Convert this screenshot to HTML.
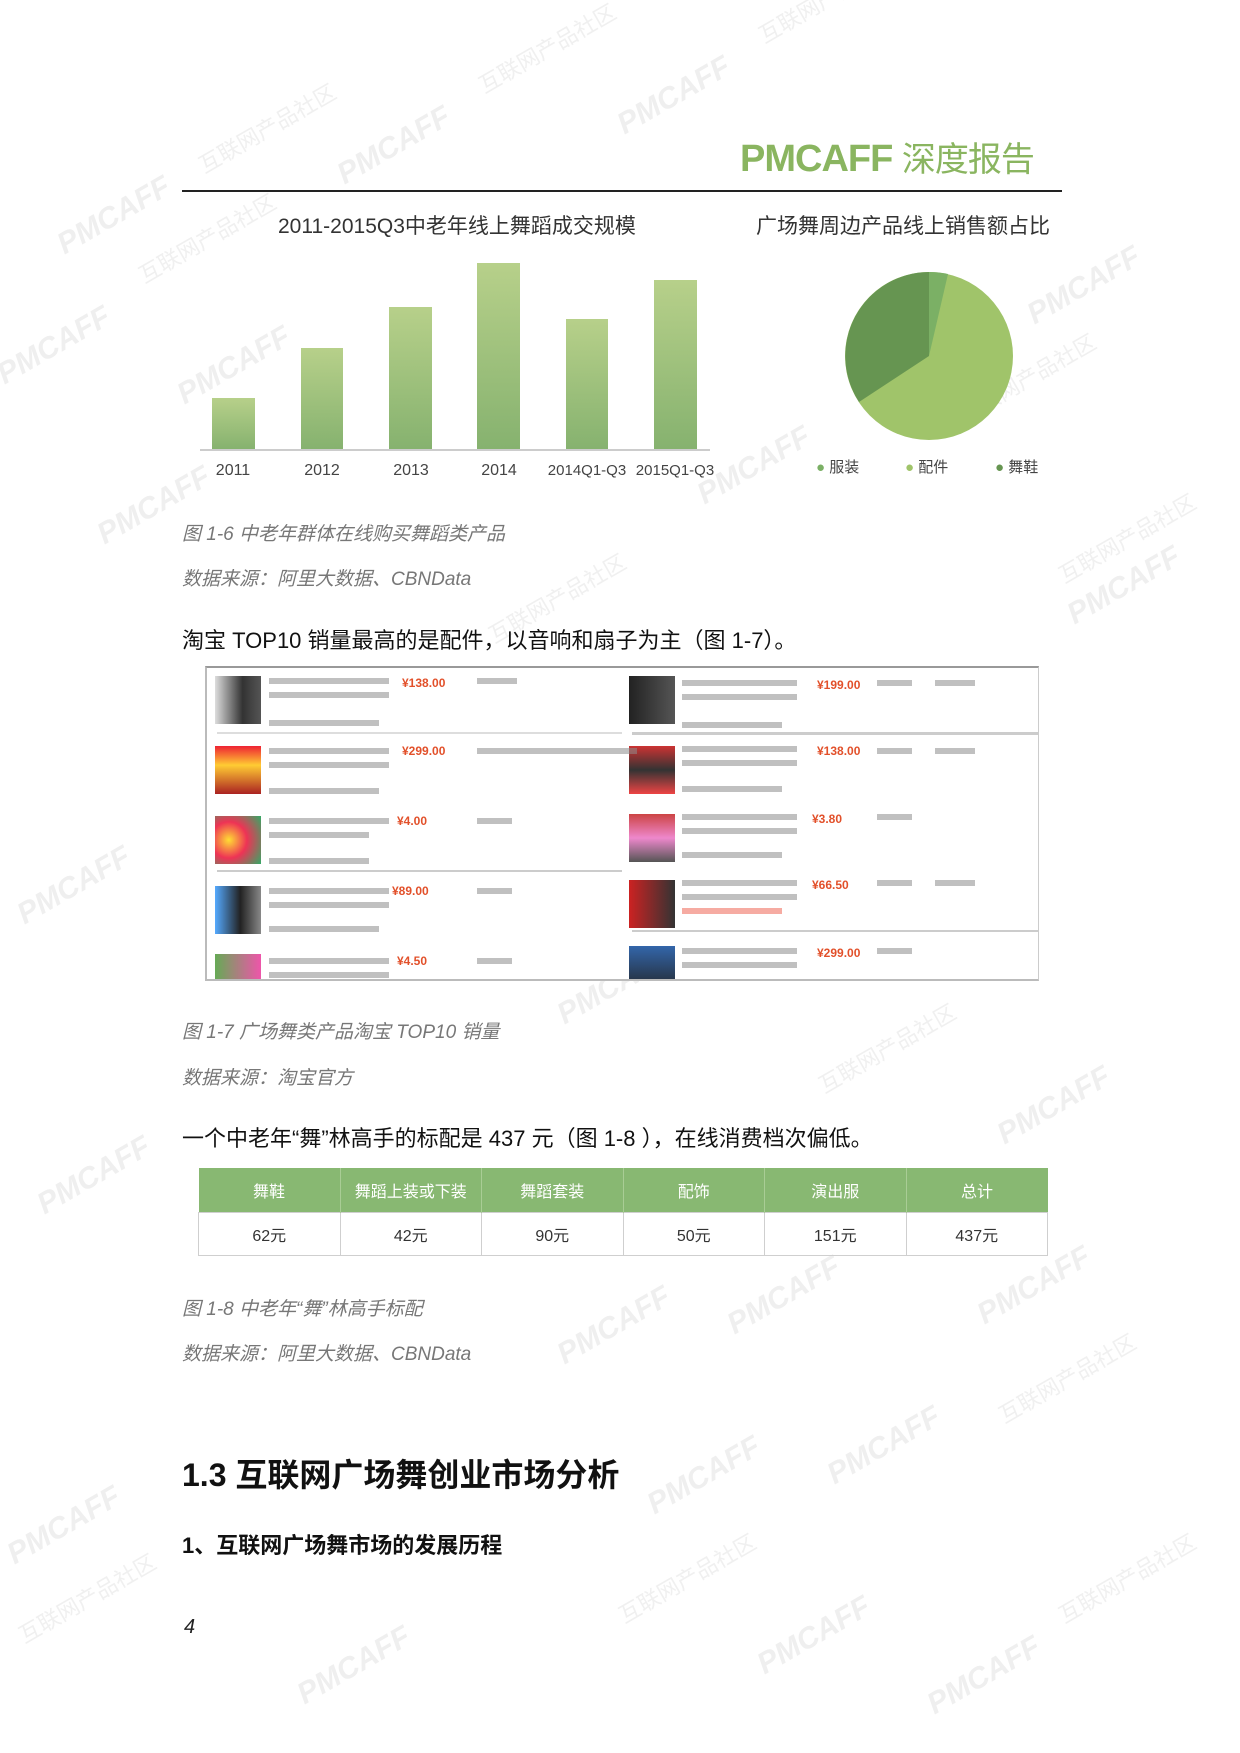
<!DOCTYPE html>
<html><head><meta charset="utf-8"><style>
*{margin:0;padding:0;box-sizing:border-box}
body{width:1240px;height:1753px;background:#fff;position:relative;overflow:hidden;font-family:"Liberation Sans","Noto Sans CJK SC",sans-serif;color:#222}
.a{position:absolute;white-space:nowrap;z-index:2}
.wm{position:absolute;white-space:nowrap;color:#efefef;transform:rotate(-30deg);transform-origin:left center;font-weight:bold;font-style:italic;font-size:30px;z-index:1;pointer-events:none}
.wm2{position:absolute;white-space:nowrap;color:#f0f0f0;transform:rotate(-30deg);transform-origin:left center;font-size:22px;z-index:1}
.cap{font-style:italic;color:#777;font-size:19px}
.bar{position:absolute;background:linear-gradient(#b7d08a,#86b26f);z-index:2}
.yl{position:absolute;top:462px;font-size:16px;color:#444;text-align:center;width:90px;z-index:2}
table{border-collapse:collapse;position:absolute;left:198px;top:1168px;width:850px;font-size:16px;text-align:center;table-layout:fixed;z-index:2}
th{background:#88b872;color:#fff;font-weight:normal;height:44px;border-right:1px solid #a9cd95}
td{height:43px;border:1px solid #cfcfcf;color:#333;background:transparent}
.th{position:absolute;width:46px;height:48px}
.ln{position:absolute;height:6px;background:#8c8c8c;opacity:.55}
.pc{position:absolute;color:#e2502a;font-size:12px;font-weight:bold}
</style></head><body>

<div class="a" style="left:740px;top:132px;font-size:38px;font-weight:bold;color:#8ab560;letter-spacing:-1px">PMCAFF <span style="font-weight:normal;font-size:34px">深度报告</span></div>
<div class="a" style="left:182px;top:190px;width:880px;height:2px;background:#222"></div>

<div class="a" style="left:278px;top:210px;font-size:21px;color:#333">2011-2015Q3中老年线上舞蹈成交规模</div>
<div class="a" style="left:756px;top:210px;font-size:21px;color:#333">广场舞周边产品线上销售额占比</div>

<div class="bar" style="left:212px;top:398px;width:43px;height:51px"></div>
<div class="bar" style="left:301px;top:348px;width:42px;height:101px"></div>
<div class="bar" style="left:389px;top:307px;width:43px;height:142px"></div>
<div class="bar" style="left:477px;top:263px;width:43px;height:186px"></div>
<div class="bar" style="left:566px;top:319px;width:42px;height:130px"></div>
<div class="bar" style="left:654px;top:280px;width:43px;height:169px"></div>
<div class="a" style="left:200px;top:449px;width:510px;height:2px;background:#ccc"></div>
<div class="yl" style="left:188px">2011</div>
<div class="yl" style="left:277px">2012</div>
<div class="yl" style="left:366px">2013</div>
<div class="yl" style="left:454px">2014</div>
<div class="yl" style="left:532px;width:110px;font-size:15px">2014Q1-Q3</div>
<div class="yl" style="left:620px;width:110px;font-size:15px">2015Q1-Q3</div>

<svg class="a" style="left:844px;top:271px" width="170" height="170" viewBox="-85 -85 170 170">
<circle r="84" fill="#a0c46a"/>
<path d="M0 0 L0 -84 A84 84 0 0 1 19 -82 Z" fill="#7bb065"/>
<path d="M0 0 L-70 46 A84 84 0 0 1 0 -84 Z" fill="#669551"/>
</svg>
<div class="a" style="left:816px;top:456px;font-size:15px;color:#444"><span style="color:#7bb065">●</span> 服装</div>
<div class="a" style="left:905px;top:456px;font-size:15px;color:#444"><span style="color:#a0c46a">●</span> 配件</div>
<div class="a" style="left:995px;top:456px;font-size:15px;color:#444"><span style="color:#669551">●</span> 舞鞋</div>

<div class="a cap" style="left:182px;top:519px">图 1-6  中老年群体在线购买舞蹈类产品</div>
<div class="a cap" style="left:182px;top:564px">数据来源：阿里大数据、CBNData</div>
<div class="a" style="left:182px;top:623px;font-size:22px;color:#111">淘宝 TOP10 销量最高的是配件，以音响和扇子为主（图 1-7）。</div>

<div class="a" style="left:205px;top:666px;width:834px;height:315px;border-top:2px solid #999;border-left:2px solid #bbb;border-bottom:2px solid #bbb;border-right:1px solid #ccc;overflow:hidden;background:#fff">
 <div class="a" style="left:10px;top:64px;width:405px;height:2px;background:#ddd"></div>
 <div class="a" style="left:10px;top:202px;width:405px;height:2px;background:#ccc"></div>
 <div class="a" style="left:425px;top:64px;width:410px;height:3px;background:#ccc"></div>
 <div class="a" style="left:425px;top:262px;width:410px;height:2px;background:#ccc"></div>
 <div class="th" style="left:8px;top:8px;background:linear-gradient(90deg,#ddd,#333 60%,#555)"></div>
 <div class="th" style="left:8px;top:78px;background:linear-gradient(#e23 0,#fc3 40%,#a22)"></div>
 <div class="th" style="left:8px;top:148px;background:radial-gradient(circle at 30% 50%,#fd3,#e35 45%,#3a6)"></div>
 <div class="th" style="left:8px;top:218px;background:linear-gradient(90deg,#5af,#222 55%,#888)"></div>
 <div class="th" style="left:8px;top:286px;background:linear-gradient(90deg,#6a5,#e5a)"></div>
 <div class="th" style="left:422px;top:8px;background:linear-gradient(90deg,#222,#555)"></div>
 <div class="th" style="left:422px;top:78px;background:linear-gradient(#c33,#333 50%,#e44)"></div>
 <div class="th" style="left:422px;top:146px;background:linear-gradient(#c44,#e8c 50%,#555)"></div>
 <div class="th" style="left:422px;top:212px;background:linear-gradient(90deg,#c22,#333)"></div>
 <div class="th" style="left:422px;top:278px;background:linear-gradient(#36a,#222)"></div>
 <div class="ln" style="left:62px;top:10px;width:120px"></div><div class="ln" style="left:62px;top:24px;width:120px"></div><div class="ln" style="left:62px;top:52px;width:110px"></div>
 <div class="ln" style="left:62px;top:80px;width:120px"></div><div class="ln" style="left:62px;top:94px;width:120px"></div><div class="ln" style="left:62px;top:120px;width:110px"></div>
 <div class="ln" style="left:62px;top:150px;width:120px"></div><div class="ln" style="left:62px;top:164px;width:100px"></div><div class="ln" style="left:62px;top:190px;width:100px"></div>
 <div class="ln" style="left:62px;top:220px;width:120px"></div><div class="ln" style="left:62px;top:234px;width:120px"></div><div class="ln" style="left:62px;top:258px;width:110px"></div>
 <div class="ln" style="left:62px;top:290px;width:120px"></div><div class="ln" style="left:62px;top:304px;width:120px"></div>
 <div class="pc" style="left:195px;top:8px">¥138.00</div><div class="pc" style="left:195px;top:76px">¥299.00</div><div class="pc" style="left:190px;top:146px">¥4.00</div><div class="pc" style="left:185px;top:216px">¥89.00</div><div class="pc" style="left:190px;top:286px">¥4.50</div>
 <div class="ln" style="left:270px;top:10px;width:40px"></div><div class="ln" style="left:270px;top:80px;width:160px"></div><div class="ln" style="left:270px;top:150px;width:35px"></div><div class="ln" style="left:270px;top:220px;width:35px"></div><div class="ln" style="left:270px;top:290px;width:35px"></div>
 <div class="ln" style="left:475px;top:12px;width:115px"></div><div class="ln" style="left:475px;top:26px;width:115px"></div><div class="ln" style="left:475px;top:54px;width:100px"></div>
 <div class="ln" style="left:475px;top:78px;width:115px"></div><div class="ln" style="left:475px;top:92px;width:115px"></div><div class="ln" style="left:475px;top:118px;width:100px"></div>
 <div class="ln" style="left:475px;top:146px;width:115px"></div><div class="ln" style="left:475px;top:160px;width:115px"></div><div class="ln" style="left:475px;top:184px;width:100px"></div>
 <div class="ln" style="left:475px;top:212px;width:115px"></div><div class="ln" style="left:475px;top:226px;width:115px"></div><div class="ln" style="left:475px;top:240px;width:100px;background:#e65;"></div>
 <div class="ln" style="left:475px;top:280px;width:115px"></div><div class="ln" style="left:475px;top:294px;width:115px"></div>
 <div class="pc" style="left:610px;top:10px">¥199.00</div><div class="pc" style="left:610px;top:76px">¥138.00</div><div class="pc" style="left:605px;top:144px">¥3.80</div><div class="pc" style="left:605px;top:210px">¥66.50</div><div class="pc" style="left:610px;top:278px">¥299.00</div>
 <div class="ln" style="left:670px;top:12px;width:35px"></div><div class="ln" style="left:670px;top:80px;width:35px"></div><div class="ln" style="left:670px;top:146px;width:35px"></div><div class="ln" style="left:670px;top:212px;width:35px"></div><div class="ln" style="left:670px;top:280px;width:35px"></div>
 <div class="ln" style="left:728px;top:12px;width:40px"></div><div class="ln" style="left:728px;top:80px;width:40px"></div><div class="ln" style="left:728px;top:212px;width:40px"></div>
</div>

<div class="a cap" style="left:182px;top:1017px">图 1-7  广场舞类产品淘宝 TOP10 销量</div>
<div class="a cap" style="left:182px;top:1063px">数据来源：淘宝官方</div>
<div class="a" style="left:182px;top:1121px;font-size:22px;color:#111">一个中老年“舞”林高手的标配是 437 元（图 1-8 ），在线消费档次偏低。</div>

<table>
<tr><th>舞鞋</th><th>舞蹈上装或下装</th><th>舞蹈套装</th><th>配饰</th><th>演出服</th><th style="border-right:none">总计</th></tr>
<tr><td>62元</td><td>42元</td><td>90元</td><td>50元</td><td>151元</td><td>437元</td></tr>
</table>

<div class="a cap" style="left:182px;top:1294px">图 1-8  中老年“舞”林高手标配</div>
<div class="a cap" style="left:182px;top:1339px">数据来源：阿里大数据、CBNData</div>

<div class="a" style="left:182px;top:1450px;font-size:32px;font-weight:bold;color:#111">1.3  互联网广场舞创业市场分析</div>
<div class="a" style="left:182px;top:1528px;font-size:22px;font-weight:bold;color:#111">1、互联网广场舞市场的发展历程</div>
<div class="a" style="left:184px;top:1616px;font-size:20px;font-style:italic;color:#222">4</div>

<div class="wm" style="left:60px;top:230px">PMCAFF</div><div class="wm2" style="left:200px;top:150px">互联网产品社区</div>
<div class="wm" style="left:340px;top:160px">PMCAFF</div><div class="wm2" style="left:480px;top:70px">互联网产品社区</div>
<div class="wm" style="left:620px;top:110px">PMCAFF</div><div class="wm2" style="left:760px;top:20px">互联网产品社区</div>
<div class="wm" style="left:0px;top:360px">PMCAFF</div><div class="wm2" style="left:140px;top:260px">互联网产品社区</div>
<div class="wm" style="left:180px;top:380px">PMCAFF</div><div class="wm" style="left:1030px;top:300px">PMCAFF</div>
<div class="wm" style="left:700px;top:480px">PMCAFF</div><div class="wm2" style="left:960px;top:400px">互联网产品社区</div>
<div class="wm" style="left:100px;top:520px">PMCAFF</div><div class="wm2" style="left:1060px;top:560px">互联网产品社区</div>
<div class="wm" style="left:1070px;top:600px">PMCAFF</div><div class="wm2" style="left:490px;top:620px">互联网产品社区</div>
<div class="wm" style="left:920px;top:820px">PMCAFF</div><div class="wm" style="left:20px;top:900px">PMCAFF</div>
<div class="wm" style="left:560px;top:1000px">PMCAFF</div><div class="wm2" style="left:820px;top:1070px">互联网产品社区</div>
<div class="wm" style="left:1000px;top:1120px">PMCAFF</div><div class="wm" style="left:40px;top:1190px">PMCAFF</div>
<div class="wm" style="left:560px;top:1340px">PMCAFF</div><div class="wm" style="left:730px;top:1310px">PMCAFF</div>
<div class="wm" style="left:980px;top:1300px">PMCAFF</div><div class="wm2" style="left:1000px;top:1400px">互联网产品社区</div>
<div class="wm" style="left:650px;top:1490px">PMCAFF</div><div class="wm" style="left:830px;top:1460px">PMCAFF</div>
<div class="wm" style="left:10px;top:1540px">PMCAFF</div><div class="wm2" style="left:20px;top:1620px">互联网产品社区</div>
<div class="wm" style="left:300px;top:1680px">PMCAFF</div><div class="wm" style="left:760px;top:1650px">PMCAFF</div>
<div class="wm" style="left:930px;top:1690px">PMCAFF</div><div class="wm2" style="left:1060px;top:1600px">互联网产品社区</div>
<div class="wm2" style="left:620px;top:1600px">互联网产品社区</div>
</body></html>
